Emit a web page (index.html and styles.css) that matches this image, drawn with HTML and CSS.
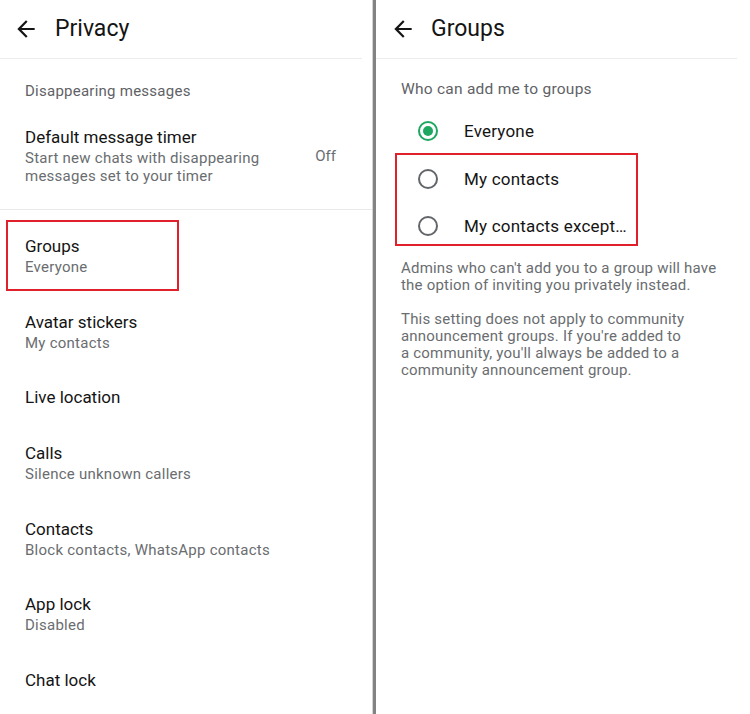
FILE: index.html
```html
<!DOCTYPE html>
<html lang="en">
<head>
<meta charset="utf-8">
<title>Privacy / Groups</title>
<link rel="stylesheet" href="styles.css">
</head>
<body>
<div class="screen">
  <section class="panel panel-left">
    <header class="appbar">
      <svg class="back" viewBox="0 0 24 24" width="26" height="26" aria-hidden="true"><path d="M20 11H7.83l5.59-5.59L12 4l-8 8 8 8 1.41-1.41L7.83 13H20v-2z"/></svg>
      <h1 class="appbar-title">Privacy</h1>
    </header>
    <div class="section">
      <div class="section-title">Disappearing messages</div>
      <div class="row row-split">
        <div class="row-text">
          <div class="row-title">Default message timer</div>
          <div class="row-sub">Start new chats with disappearing<br>messages set to your timer</div>
        </div>
        <div class="row-value">Off</div>
      </div>
    </div>
    <div class="list">
      <div class="row"><div class="row-title">Groups</div><div class="row-sub">Everyone</div></div>
      <div class="row"><div class="row-title">Avatar stickers</div><div class="row-sub">My contacts</div></div>
      <div class="row"><div class="row-title">Live location</div></div>
      <div class="row"><div class="row-title">Calls</div><div class="row-sub">Silence unknown callers</div></div>
      <div class="row"><div class="row-title">Contacts</div><div class="row-sub">Block contacts, WhatsApp contacts</div></div>
      <div class="row"><div class="row-title">App lock</div><div class="row-sub">Disabled</div></div>
      <div class="row"><div class="row-title">Chat lock</div></div>
    </div>
    <div class="highlight highlight-left"></div>
  </section>
  <div class="divider"></div>
  <section class="panel panel-right">
    <header class="appbar">
      <svg class="back" viewBox="0 0 24 24" width="26" height="26" aria-hidden="true"><path d="M20 11H7.83l5.59-5.59L12 4l-8 8 8 8 1.41-1.41L7.83 13H20v-2z"/></svg>
      <h1 class="appbar-title">Groups</h1>
    </header>
    <div class="content">
      <div class="question">Who can add me to groups</div>
      <div class="options">
        <div class="option"><span class="radio radio-on"></span><span class="option-label">Everyone</span></div>
        <div class="option"><span class="radio"></span><span class="option-label">My contacts</span></div>
        <div class="option"><span class="radio"></span><span class="option-label">My contacts except…</span></div>
      </div>
      <p class="note">Admins who can't add you to a group will have<br>the option of inviting you privately instead.</p>
      <p class="note note-second">This setting does not apply to community<br>announcement groups. If you're added to<br>a community, you'll always be added to a<br>community announcement group.</p>
    </div>
    <div class="highlight highlight-right"></div>
  </section>
</div>
</body>
</html>
```

FILE: styles.css
```css
* { box-sizing: border-box; }
html, body { margin: 0; padding: 0; background: #ffffff; }
body {
  font-family: Roboto, "Noto Sans", "Liberation Sans", sans-serif;
  color: #141414;
  width: 750px;
  height: 714px;
  overflow: hidden;
}
.screen { display: flex; width: 750px; height: 714px; }
.panel { position: relative; height: 714px; }
.panel-left { width: 372px; }
.panel-right { width: 374px; }
.divider {
  width: 4px;
  height: 714px;
  border-left: 1px solid #d4d4d4;
  background: #838383;
}
.appbar {
  height: 59px;
  margin-right: 10px;
  border-bottom: 1px solid #ececec;
  display: flex;
  align-items: center;
  padding-left: 13px;
}
.panel-right .appbar { margin-right: 13px; padding-left: 14px; }
.back { fill: #151515; flex: none; }
.appbar-title {
  margin: 0 0 0 16px;
  font-size: 23px;
  font-weight: 400;
  line-height: 28px;
  color: #141414;
}
.panel-right .appbar-title { margin-left: 15px; }
.section { border-bottom: 1px solid #e9e9e9; padding-bottom: 7px; }
.section-title {
  margin-top: 22px;
  margin-bottom: 8px;
  padding-left: 25px;
  font-size: 15px;
  line-height: 20px;
  letter-spacing: 0.25px;
  color: #5f6266;
}
.row { padding: 17px 25px; }
.row-split { display: flex; align-items: center; justify-content: space-between; padding-right: 36px; }
.row-title { font-size: 17px; line-height: 22px; color: #141414; }
.row-sub {
  margin-top: 2px;
  font-size: 15px;
  line-height: 17.5px;
  letter-spacing: 0.25px;
  color: #6a6d70;
}
.row-value { font-size: 15px; color: #6a6d70; }
.list { padding-top: 8px; }
.content { padding: 20px 25px 0 25px; }
.question { font-size: 15.5px; line-height: 20px; letter-spacing: 0.25px; color: #5f6266; }
.options { margin-top: 8.5px; }
.option { height: 47.5px; display: flex; align-items: center; padding-left: 17px; }
.radio {
  width: 20px;
  height: 20px;
  border: 2px solid #62666a;
  border-radius: 50%;
  flex: none;
  display: flex;
  align-items: center;
  justify-content: center;
}
.radio-on { border-color: #1da760; }
.radio-on::after {
  content: "";
  width: 10px;
  height: 10px;
  border-radius: 50%;
  background: #1da760;
}
.option-label { margin-left: 26px; font-size: 17px; letter-spacing: 0.2px; color: #141414; }
.note {
  margin: 9.5px 0 0 0;
  font-size: 15px;
  line-height: 17px;
  letter-spacing: 0.2px;
  color: #6a6d70;
}
.note-second { margin-top: 17px; }
.highlight { position: absolute; border: 2px solid #e0212c; pointer-events: none; }
.highlight-left { left: 6px; top: 220px; width: 173px; height: 71px; }
.highlight-right { left: 19px; top: 153px; width: 243px; height: 93px; }
```
